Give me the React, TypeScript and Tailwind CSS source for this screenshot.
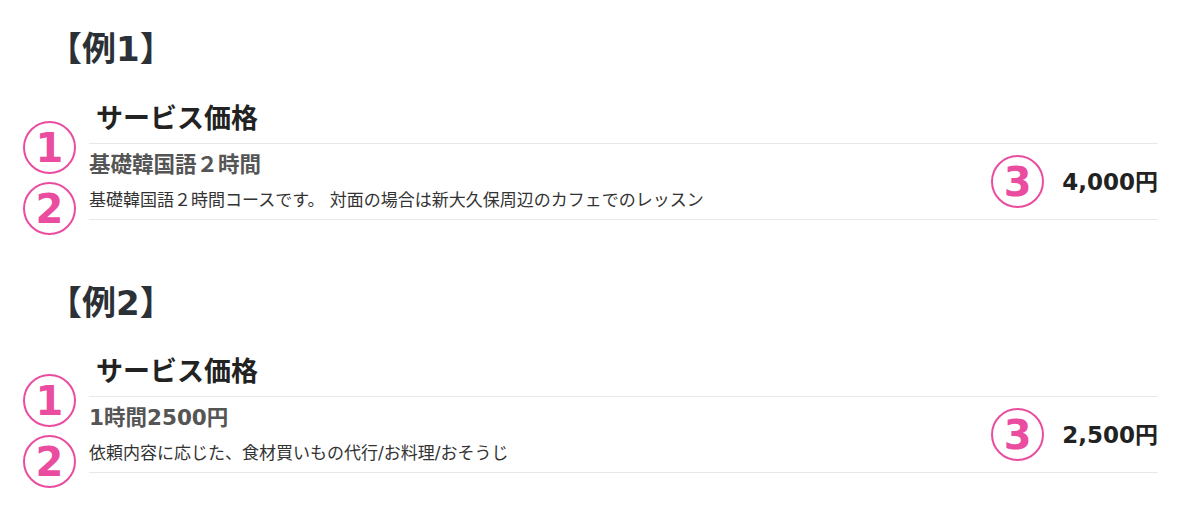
const examples = [
  {
    label: "【例1】",
    title: "基礎韓国語２時間",
    desc: "基礎韓国語２時間コースです。 対面の場合は新大久保周辺のカフェでのレッスン",
    price: "4,000円",
  },
  {
    label: "【例2】",
    title: "1時間2500円",
    desc: "依頼内容に応じた、食材買いもの代行/お料理/おそうじ",
    price: "2,500円",
  },
]

const Mark = ({ n, className = "" }: { n: string; className?: string }) => (
  <div
    className={`flex h-[53px] w-[53px] items-center justify-center rounded-full border-2 border-[#ea4c9f] text-[40px] leading-none font-bold text-[#ea4c9f] ${className}`}
  >
    {n}
  </div>
)

export default function App() {
  return (
    <div className="min-h-[516px] bg-white pt-[27px] pl-[48px] font-['DejaVu_Sans','Noto_Sans_CJK_JP',sans-serif]">
      {examples.map((ex, i) => (
        <section key={ex.label} className={i > 0 ? "mt-[61px]" : ""}>
          <h2 className="text-[34px] leading-[44px] font-bold text-[#2b3136]">
            {ex.label}
          </h2>
          <div className={`ml-[41px] w-[1069px] ${i > 0 ? "mt-[30px]" : "mt-[31px]"}`}>
            <h3 className="pb-[7px] pl-[7px] text-[27px] leading-[34px] font-bold text-[#222]">
              サービス価格
            </h3>
            <div className="relative flex h-[77px] items-center justify-between border-y border-[#e8e8e8]">
              <Mark n="1" className="absolute top-[-23px] left-[-66px]" />
              <Mark n="2" className="absolute top-[38px] left-[-66px]" />
              <div className="flex flex-col">
                <p className="text-[21.5px] leading-[28px] font-bold text-[#555]">
                  {ex.title}
                </p>
                <p className="mt-[9px] text-[17px] leading-[24px] text-[#333]">
                  {ex.desc}
                </p>
              </div>
              <div className="flex items-center gap-[18px]">
                <Mark n="3" />
                <p className="text-[23px] leading-[30px] font-bold text-[#222]">
                  {ex.price}
                </p>
              </div>
            </div>
          </div>
        </section>
      ))}
    </div>
  )
}
